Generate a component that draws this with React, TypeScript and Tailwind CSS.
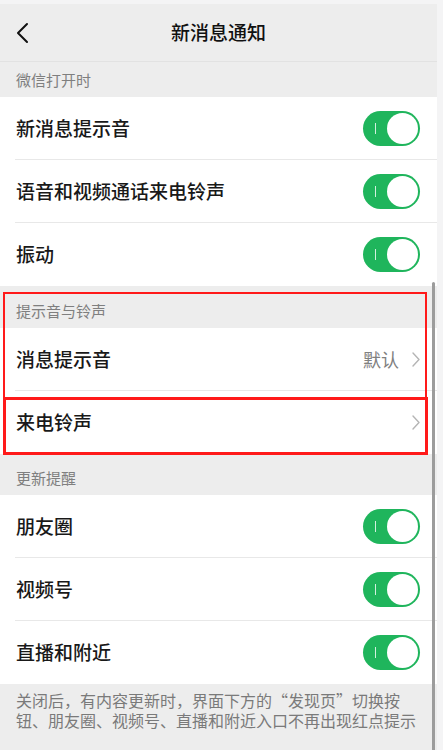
import React from "react";

function Toggle() {
  return (
    <div className="flex h-[35px] w-[57px] items-center justify-between rounded-full bg-[#1fb55c] pl-[12px] pr-[2px]">
      <div className="h-[11px] w-[1px] bg-white/80" />
      <div className="h-[31px] w-[31px] rounded-full bg-white" />
    </div>
  );
}

function Chevron() {
  return (
    <svg width="8" height="15" viewBox="0 0 8 15" fill="none">
      <path d="M1 1l6 6.5L1 14" stroke="#b5b5b5" strokeWidth="1.4" strokeLinecap="round" strokeLinejoin="round" />
    </svg>
  );
}

function SectionHeader({ title, top }: { title: string; top: string }) {
  return (
    <div className={`bg-[#ededed] px-[16px] pb-[7px] text-[15px] leading-[21px] text-[#7f7f7f] ${top}`}>
      {title}
    </div>
  );
}

function Row({
  label,
  right,
  last,
}: {
  label: string;
  right: React.ReactNode;
  last?: boolean;
}) {
  return (
    <div className="bg-white pl-[15px]">
      <div
        className={`flex h-[63px] items-center justify-between pl-[1px] pr-[17px] ${
          last ? "" : "border-b border-[#e8e8e8]"
        }`}
      >
        <span className="text-[19px] font-medium text-[#191919]">{label}</span>
        {right}
      </div>
    </div>
  );
}

export default function App() {
  return (
    <div className="relative min-h-[750px] overflow-hidden bg-[#f4f4f5] font-['Noto_Sans_CJK_SC','Noto_Sans',sans-serif]">
      <div className="w-[437px] pt-[4px]">
        {/* navigation bar */}
        <div className="grid h-[58px] grid-cols-[1fr_auto_1fr] items-center border-b border-[#e2e2e2] bg-[#ededed] pl-[15px]">
          <svg width="14" height="22" viewBox="0 0 14 22" fill="none">
            <path d="M12 2L3 11l9 9" stroke="#111" strokeWidth="2" strokeLinecap="round" strokeLinejoin="round" />
          </svg>
          <span className="-ml-[15px] text-[19px] font-medium text-[#111]">新消息通知</span>
          <div />
        </div>

        <SectionHeader title="微信打开时" top="pt-[7px]" />
        <Row label="新消息提示音" right={<Toggle />} />
        <Row label="语音和视频通话来电铃声" right={<Toggle />} />
        <Row label="振动" right={<Toggle />} last />

        <div className="relative">
          <SectionHeader title="提示音与铃声" top="pt-[14px]" />
          <Row
            label="消息提示音"
            right={
              <div className="flex items-center gap-[13px]">
                <span className="text-[18px] text-[#808080]">默认</span>
                <Chevron />
              </div>
            }
          />
          <Row label="来电铃声" right={<Chevron />} last />

          {/* highlight outlines */}
          <div className="absolute left-[3px] top-[6px] h-[107px] w-[424px] border-2 border-[#ff1a1a]" />
          <div className="absolute left-[3px] top-[111px] h-[58px] w-[425px] border-[3px] border-[#ff1a1a]" />
        </div>

        <SectionHeader title="更新提醒" top="pt-[13px]" />
        <Row label="朋友圈" right={<Toggle />} />
        <Row label="视频号" right={<Toggle />} />
        <Row label="直播和附近" right={<Toggle />} last />

        <div className="min-h-[70px] bg-[#ededed] px-[16px] pt-[6px] text-[16px] leading-[20px] text-[#7a7a7a]">
          关闭后，有内容更新时，界面下方的“发现页”切换按钮、朋友圈、视频号、直播和附近入口不再出现红点提示
        </div>
      </div>

      {/* scroll indicator */}
      <div className="absolute left-[432px] top-[282px] h-[480px] w-[3px] rounded-full bg-[#9c9c9c]" />
    </div>
  );
}
